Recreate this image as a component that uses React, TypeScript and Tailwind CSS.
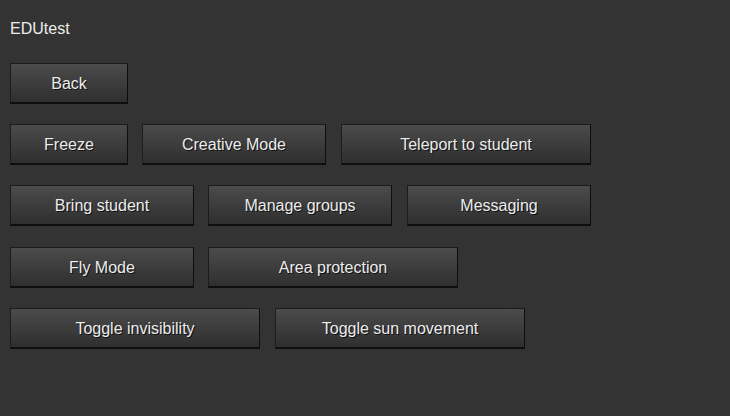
import React from 'react';

type Btn = { label: string; w: string; ml?: string };

const rows: Btn[][] = [
  [{ label: 'Back', w: 'w-[118px]' }],
  [
    { label: 'Freeze', w: 'w-[118px]' },
    { label: 'Creative Mode', w: 'w-[184px]', ml: 'ml-[14px]' },
    { label: 'Teleport to student', w: 'w-[250px]', ml: 'ml-[15px]' },
  ],
  [
    { label: 'Bring student', w: 'w-[184px]' },
    { label: 'Manage groups', w: 'w-[184px]', ml: 'ml-[14px]' },
    { label: 'Messaging', w: 'w-[184px]', ml: 'ml-[15px]' },
  ],
  [
    { label: 'Fly Mode', w: 'w-[184px]' },
    { label: 'Area protection', w: 'w-[250px]', ml: 'ml-[14px]' },
  ],
  [
    { label: 'Toggle invisibility', w: 'w-[250px]' },
    { label: 'Toggle sun movement', w: 'w-[250px]', ml: 'ml-[15px]' },
  ],
];

function FormButton({ label, w, ml }: Btn) {
  return (
    <button
      className={`${w} ${ml ?? ''} h-[41px] pt-[2px] flex items-center justify-center border border-[#1c1c1c] border-b-2 border-b-[#0e0e0e] border-r-[#0e0e0e] bg-gradient-to-b from-[#4b4b4b] to-[#2f2f2f] text-[16px] text-[#ececec] [text-shadow:1px_1px_0_#111]`}
    >
      {label}
    </button>
  );
}

export default function App() {
  return (
    <div
      className="w-[730px] h-[416px] bg-[#333333] px-[10px] pt-[19px]"
      style={{ fontFamily: '"Liberation Sans", Arial, sans-serif' }}
    >
      <h1 className="text-[16px] leading-[20px] text-[#ececec]">EDUtest</h1>
      <div className="mt-[24px] flex flex-col gap-[20px]">
        {rows.map((row, i) => (
          <div key={i} className={`flex ${i === 3 ? 'mt-px' : ''}`}>
            {row.map((b) => (
              <FormButton key={b.label} {...b} />
            ))}
          </div>
        ))}
      </div>
    </div>
  );
}
